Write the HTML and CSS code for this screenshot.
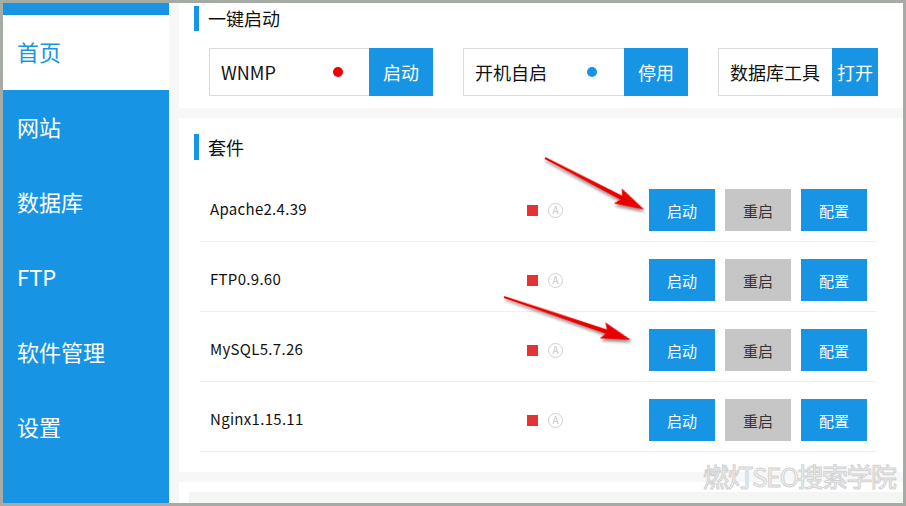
FILE: index.html
```html
<!DOCTYPE html>
<html lang="zh-CN">
  <head>
    <meta charset="UTF-8" />
    <meta name="viewport" content="width=device-width, initial-scale=1.0" />
    <link rel="stylesheet" href="styles.css">
    <title>WNMP</title>
  </head>
  <body>
    <div class="window">
      <aside class="sidebar">
        <div class="brand"></div>
        <nav class="nav">
          <a class="nav-item active">首页</a>
          <a class="nav-item">网站</a>
          <a class="nav-item">数据库</a>
          <a class="nav-item">FTP</a>
          <a class="nav-item">软件管理</a>
          <a class="nav-item">设置</a>
        </nav>
      </aside>

      <main class="content">
        <section class="card quick">
          <h2 class="card-title">一键启动</h2>
          <div class="quick-row">
            <div class="quick-group">
              <div class="field field-wnmp">WNMP<i class="dot dot-red"></i></div>
              <button class="btn">启动</button>
            </div>
            <div class="quick-group">
              <div class="field field-boot">开机自启<i class="dot dot-blue"></i></div>
              <button class="btn">停用</button>
            </div>
            <div class="quick-group">
              <div class="field field-db">数据库工具</div>
              <button class="btn btn-narrow">打开</button>
            </div>
          </div>
        </section>

        <section class="card suite">
          <h2 class="card-title">套件</h2>
          <ul class="suite-list">
            <li class="suite-row">
              <span class="suite-name">Apache2.4.39</span>
              <span class="status"><i class="stopped"></i><i class="auto">A</i></span>
              <span class="actions"><button class="btn sm">启动</button><button class="btn sm gray">重启</button><button class="btn sm">配置</button></span>
            </li>
            <li class="suite-row">
              <span class="suite-name">FTP0.9.60</span>
              <span class="status"><i class="stopped"></i><i class="auto">A</i></span>
              <span class="actions"><button class="btn sm">启动</button><button class="btn sm gray">重启</button><button class="btn sm">配置</button></span>
            </li>
            <li class="suite-row">
              <span class="suite-name">MySQL5.7.26</span>
              <span class="status"><i class="stopped"></i><i class="auto">A</i></span>
              <span class="actions"><button class="btn sm">启动</button><button class="btn sm gray">重启</button><button class="btn sm">配置</button></span>
            </li>
            <li class="suite-row">
              <span class="suite-name">Nginx1.15.11</span>
              <span class="status"><i class="stopped"></i><i class="auto">A</i></span>
              <span class="actions"><button class="btn sm">启动</button><button class="btn sm gray">重启</button><button class="btn sm">配置</button></span>
            </li>
          </ul>
        </section>

        <section class="card more">
          <div class="more-box"></div>
        </section>
      </main>
    </div>

    <!-- annotation arrows drawn on top of the screenshot -->
    <svg class="arrows" width="906" height="506" viewBox="0 0 906 506">
      <defs>
        <filter id="shade" x="-20%" y="-50%" width="140%" height="200%">
          <feDropShadow dx="2" dy="2" stdDeviation="1.5" flood-color="#000" flood-opacity="0.45" />
        </filter>
      </defs>
      <g transform="translate(545 158) rotate(27.5)" filter="url(#shade)">
        <polygon points="0,-1 86,-2.2 82,-8.5 112,0 82,8.5 86,2.2 0,1" fill="#e80000" />
      </g>
      <g transform="translate(504 297) rotate(18.7)" filter="url(#shade)">
        <polygon points="0,-1 108,-2.2 104,-8.5 134,0 104,8.5 108,2.2 0,1" fill="#e80000" />
      </g>
    </svg>

    <div class="watermark">燃灯SEO搜索学院</div>
  </body>
</html>
```

FILE: styles.css
```css
body {
    margin: 0;
    font-family: "Noto Sans CJK SC", "Noto Sans", sans-serif;
    color: #111;
}

.window {
    display: flex;
    width: 906px;
    height: 506px;
    border: 3px solid #a6aba6;
    box-sizing: border-box;
    overflow: hidden;
}

/* sidebar */
.sidebar {
    width: 166px;
    flex-shrink: 0;
    background-color: #1795e4;
}

.brand {
    height: 12px;
}

.nav-item {
    display: flex;
    align-items: center;
    height: 75px;
    box-sizing: border-box;
    padding: 0 0 3px 14px;
    font-size: 22px;
    color: #fff;
    cursor: pointer;
}

.nav-item.active {
    background-color: #fff;
    color: #1795e4;
}

/* main */
.content {
    flex: 1;
    display: flex;
    flex-direction: column;
    gap: 10px;
    padding-left: 10px;
    background-color: #f7f7f7;
}

.card {
    background-color: #fff;
    padding-left: 15px;
}

.card-title {
    margin: 0;
    height: 26px;
    line-height: 26px;
    padding-left: 9px;
    border-left: 5px solid #1795e4;
    font-size: 18px;
    font-weight: normal;
}

.quick {
    padding-top: 3px;
    padding-bottom: 12px;
}

.quick .card-title {
    height: 25px;
    line-height: 25px;
}

.quick-row {
    display: flex;
    gap: 30px;
    margin-top: 17px;
    padding-left: 15px;
}

.quick-group {
    display: flex;
}

.field {
    display: flex;
    align-items: center;
    justify-content: space-between;
    height: 48px;
    box-sizing: border-box;
    padding: 0 26px 0 11px;
    border: 1px solid #dcdcdc;
    border-right: none;
    font-size: 18px;
    white-space: nowrap;
}

.field-wnmp {
    width: 160px;
}

.field-boot {
    width: 161px;
    padding-right: 27px;
}

.field-db {
    width: 114px;
    padding-right: 0;
}

.dot {
    width: 10px;
    height: 10px;
    border-radius: 50%;
}

.dot-red {
    background-color: #f00000;
}

.dot-blue {
    background-color: #1795e4;
}

.btn {
    width: 64px;
    height: 48px;
    border: none;
    padding: 0;
    background-color: #1795e4;
    color: #fff;
    font-family: inherit;
    font-size: 18px;
    cursor: pointer;
}

.btn-narrow {
    width: 46px;
}

/* suite list */
.suite {
    padding-top: 16px;
    padding-bottom: 20px;
    padding-right: 27px;
}

.suite-list {
    list-style: none;
    margin: 12px 0 0 6px;
    padding: 0;
}

.suite-row {
    display: flex;
    align-items: center;
    padding: 17px 9px 10px 10px;
    border-bottom: 1px solid #efefef;
    font-size: 15px;
}

.suite-name {
    flex: 1;
    padding-bottom: 3px;
    letter-spacing: 0.3px;
}

.status {
    display: flex;
    align-items: center;
    gap: 10px;
    width: 122px;
}

.stopped {
    width: 11px;
    height: 11px;
    background-color: #e53333;
}

.auto {
    display: flex;
    align-items: center;
    justify-content: center;
    width: 13px;
    height: 13px;
    border: 1px solid #cfcfcf;
    border-radius: 50%;
    font-style: normal;
    font-size: 10px;
    line-height: 1;
    color: #c8c8c8;
}

.actions {
    display: flex;
    gap: 10px;
}

.btn.sm {
    width: 66px;
    height: 42px;
    font-size: 15px;
}

.btn.gray {
    background-color: #c6c6c6;
    color: #333;
}

.more {
    flex: 1;
    padding: 10px 0 0 10px;
}

.more-box {
    height: 40px;
    background-color: #f5f5f5;
}

/* overlays */
.arrows {
    position: absolute;
    top: 0;
    left: 0;
    pointer-events: none;
}

.watermark {
    position: absolute;
    left: 703px;
    top: 457px;
    font-size: 26px;
    letter-spacing: -1.5px;
    color: #f4f4f4;
    -webkit-text-stroke: 1px #d2d2d2;
    pointer-events: none;
}
```
